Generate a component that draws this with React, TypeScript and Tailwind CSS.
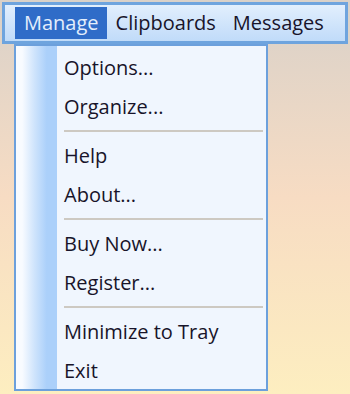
import React from "react";

const groups = [
  ["Options...", "Organize..."],
  ["Help", "About..."],
  ["Buy Now...", "Register..."],
  ["Minimize to Tray", "Exit"],
];

export default function App() {
  return (
    <div
      className="relative w-[350px] h-[394px] overflow-hidden bg-gradient-to-b from-[#d9d1c9] via-[#f7dcc3] to-[#fdeec0]"
      style={{ fontFamily: '"Open Sans", "Noto Sans", sans-serif' }}
    >
      {/* menu bar */}
      <div className="mx-[2px] mt-[2px] h-[42px] border-[3px] border-[#6ea4de] bg-gradient-to-b from-[#e2effd] to-[#c0dbf9] flex items-center pl-[10px]">
        <div className="h-[32px] pl-[9px] pr-[8px] flex items-center bg-[#2f6cc8] text-[#e3eefc] text-[20px]">Manage</div>
        <div className="h-[32px] pl-[9px] pr-[8px] flex items-center text-[#18142a] text-[20px]">Clipboards</div>
        <div className="h-[32px] pl-[9px] pr-[8px] flex items-center text-[#18142a] text-[20px]">Messages</div>
      </div>

      {/* dropdown */}
      <div className="absolute left-[14px] top-[44px] w-[254px] h-[347px] border-2 border-[#6ca0dc] bg-[#f0f6fe] flex">
        <div className="w-[41px] bg-gradient-to-r from-[#f8fbff] from-15% via-[#cfe4fc] via-45% to-[#abd0fa] to-75%" />
        <div className="flex-1 flex flex-col pt-[2px] pr-[3px]">
          {groups.map((g, gi) => (
            <div key={gi} className="flex flex-col">
              {gi > 0 && (
                <div className="py-[4px] pl-[7px]">
                  <div className="h-[2px] bg-[#cdc9c2]" />
                </div>
              )}
              {g.map((item) => (
                <div key={item} className="h-[39px] flex items-center pl-[7px] text-[20px] text-[#18142a]">
                  {item}
                </div>
              ))}
            </div>
          ))}
        </div>
      </div>
    </div>
  );
}
